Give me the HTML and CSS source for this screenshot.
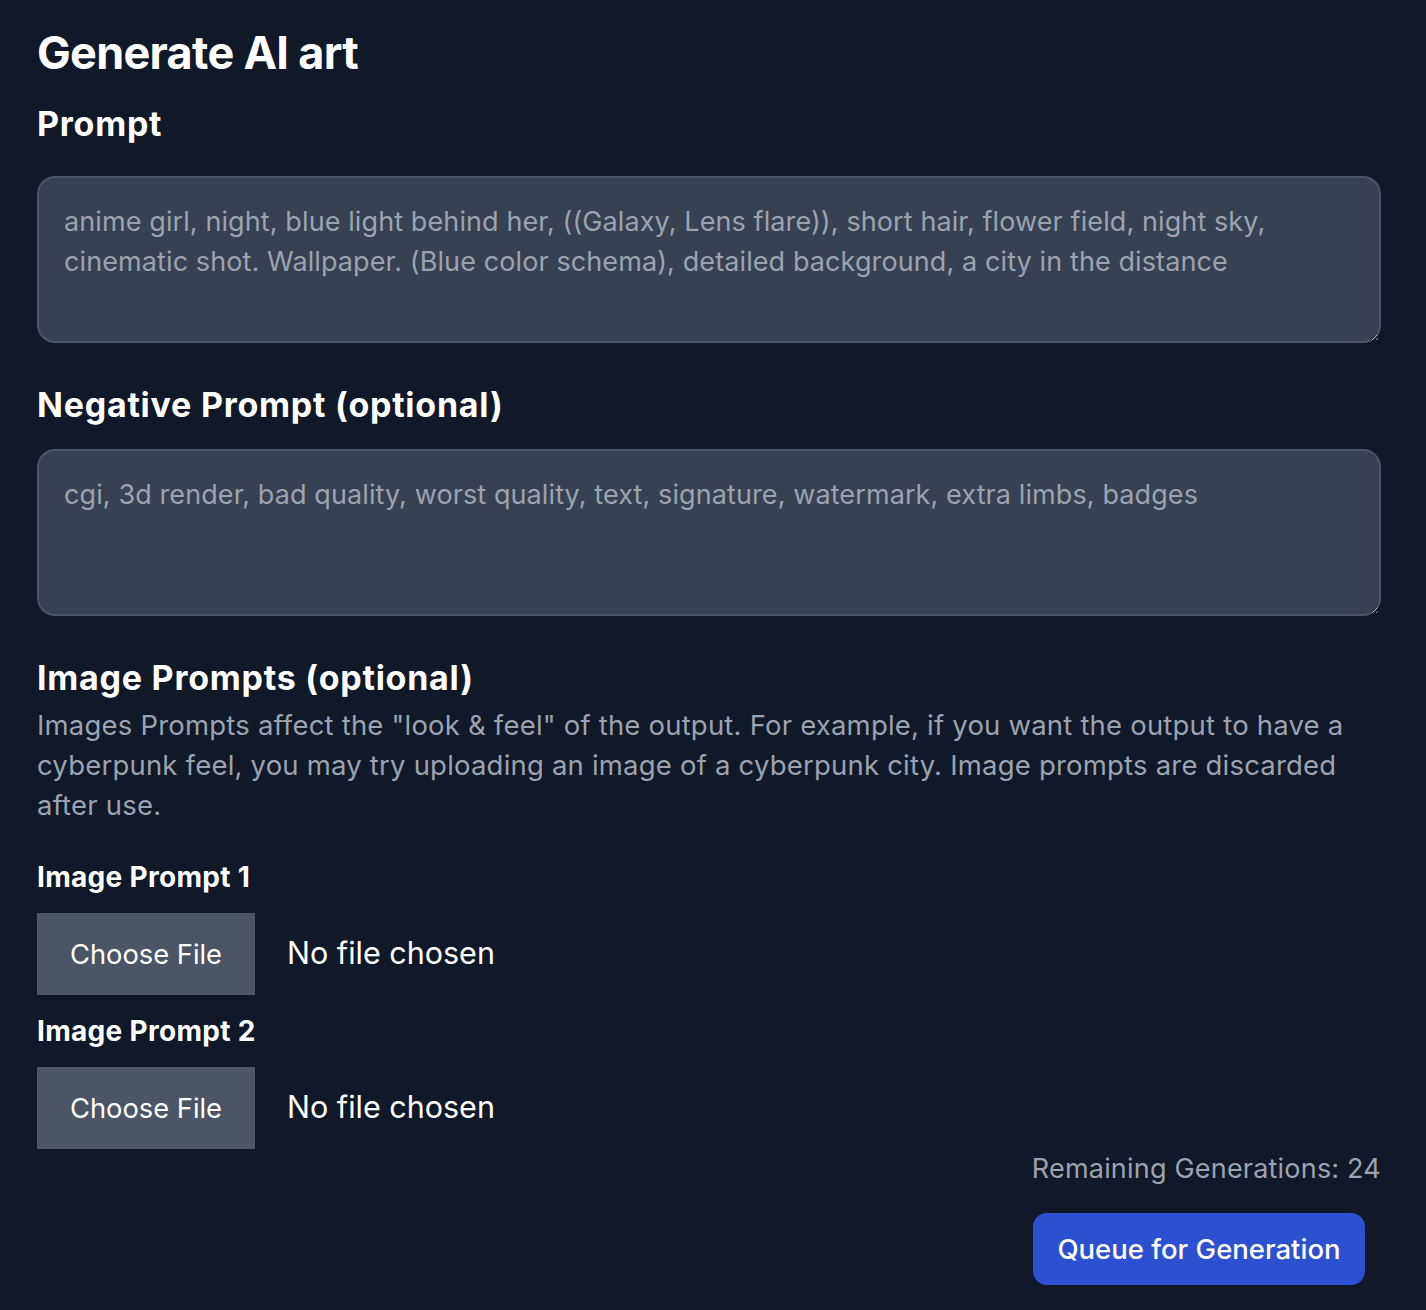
FILE: index.html
```html
<!DOCTYPE html>
<html lang="en">
<head>
<meta charset="utf-8">
<title>Generate AI art</title>
<link rel="stylesheet" href="styles.css">
</head>
<body>
<main class="page">
  <h1 class="title">Generate AI art</h1>

  <section class="field field-prompt">
    <h2 class="heading">Prompt</h2>
    <textarea class="box" placeholder="anime girl, night, blue light behind her, ((Galaxy, Lens flare)), short hair, flower field, night sky, cinematic shot. Wallpaper. (Blue color schema), detailed background, a city in the distance"></textarea>
  </section>

  <section class="field field-negative">
    <h2 class="heading">Negative Prompt (optional)</h2>
    <textarea class="box" placeholder="cgi, 3d render, bad quality, worst quality, text, signature, watermark, extra limbs, badges"></textarea>
  </section>

  <section class="images">
    <h2 class="heading">Image Prompts (optional)</h2>
    <p class="desc">Images Prompts affect the "look &amp; feel" of the output. For example, if you want the output to have a cyberpunk feel, you may try uploading an image of a cyberpunk city. Image prompts are discarded after use.</p>

    <div class="upload">
      <label class="label" for="img1">Image Prompt 1</label>
      <input class="file" id="img1" type="file">
    </div>
    <div class="upload">
      <label class="label" for="img2">Image Prompt 2</label>
      <input class="file" id="img2" type="file">
    </div>
  </section>

  <footer class="actions">
    <div class="remaining">Remaining Generations: 24</div>
    <button class="queue" type="button">Queue for Generation</button>
  </footer>
</main>
</body>
</html>
```

FILE: styles.css
```css
html, body {
  margin: 0;
  padding: 0;
  background: #111827;
}
body {
  font-family: Inter, "Noto Sans", "Liberation Sans", sans-serif;
  color: #ffffff;
}
.page {
  padding: 23px 45px 26px 37px;
  display: flex;
  flex-direction: column;
}
.title {
  margin: 0;
  font-size: 45px;
  line-height: 60px;
  font-weight: 700;
  letter-spacing: -0.7px;
}
.field,
.images {
  display: flex;
  flex-direction: column;
}
.heading {
  margin: 0;
  font-size: 34px;
  line-height: 44px;
  font-weight: 700;
  letter-spacing: 0.75px;
}
.field-prompt .heading { margin: 19px 0 30px; }
.field-negative .heading { margin: 40px 0 22px; }
.images .heading { margin: 40px 0 5px; }
.box {
  display: block;
  box-sizing: border-box;
  width: 100%;
  height: 167px;
  margin: 0;
  padding: 24px 25px 20px;
  background: #374151;
  border: 2px solid #4b5563;
  border-radius: 18px;
  color: #ffffff;
  font-family: inherit;
  font-size: 27px;
  line-height: 40px;
  letter-spacing: 0.1px;
  resize: vertical;
  outline: none;
}
.box::placeholder {
  color: #9ca3af;
  opacity: 1;
}
.desc {
  margin: 0;
  font-size: 27.5px;
  line-height: 40px;
  letter-spacing: 0.2px;
  color: #9ca3af;
}
.upload {
  display: flex;
  flex-direction: column;
  align-items: flex-start;
  margin-top: 18px;
}
.desc + .upload { margin-top: 34px; }
.label {
  font-size: 28px;
  line-height: 36px;
  font-weight: 700;
  letter-spacing: 0.3px;
  margin-bottom: 18px;
}
.file {
  font-family: inherit;
  font-size: 30.5px;
  color: #ffffff;
  height: 82px;
}
.file::file-selector-button {
  width: 218px;
  height: 82px;
  margin-right: 32px;
  border: none;
  border-radius: 0;
  background: #4b5563;
  color: #ffffff;
  font-family: inherit;
  font-size: 27.3px;
  cursor: pointer;
}
.actions {
  display: flex;
  flex-direction: column;
  align-items: flex-end;
}
.remaining {
  font-size: 27px;
  line-height: 40px;
  letter-spacing: 0.2px;
  color: #9ca3af;
}
.queue {
  margin-top: 24px;
  margin-right: 16px;
  width: 332px;
  height: 72px;
  border: none;
  border-radius: 14px;
  background: #2d50d0;
  color: #ffffff;
  font-family: inherit;
  font-size: 27.5px;
  font-weight: 500;
}
```
